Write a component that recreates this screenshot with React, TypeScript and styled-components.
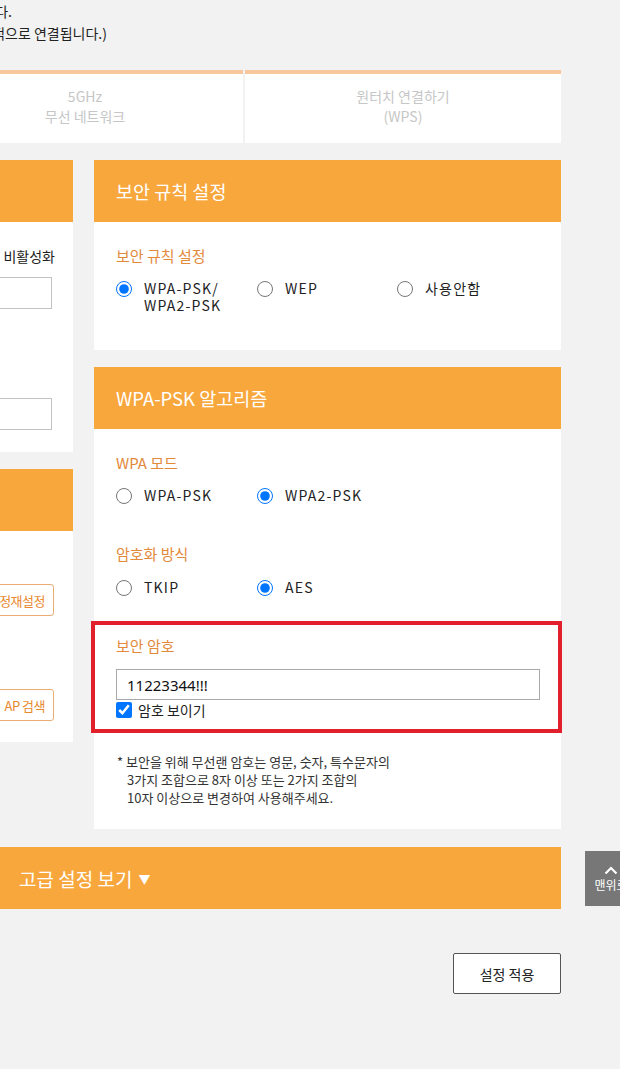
import React from "react";
import styled, { createGlobalStyle } from "styled-components";

const Global = createGlobalStyle`
  html, body { margin: 0; padding: 0; background: #f2f2f2; overflow: hidden; }
  body { font-family: "Noto Sans CJK KR", "Noto Sans", sans-serif; color: #222; }
  * { box-sizing: border-box; }
`;

const ORANGE = "#f8a73d";
const LABEL = "#e3893b";

const Page = styled.div`
  width: 788px;
  margin-left: -227px;
  min-height: 1069px;
  display: flex;
  flex-direction: column;
`;

const Intro = styled.div`
  font-size: 14px;
  line-height: 22px;
  color: #222;
`;

const IntroLine = styled.div<{ $w: number }>`
  width: ${(p) => p.$w}px;
  text-align: right;
  white-space: nowrap;
`;

const TabBar = styled.div`
  display: flex;
  justify-content: flex-end;
  gap: 2px;
  margin-top: 26px;
`;

const Tab = styled.div`
  width: 316px;
  height: 73px;
  border-top: 4px solid #f8c79d;
  background: #fff;
  display: flex;
  flex-direction: column;
  align-items: center;
  justify-content: center;
  padding-bottom: 5px;
  font-size: 14px;
  line-height: 20px;
  color: #c6c6c6;
`;

const Columns = styled.div`
  display: grid;
  grid-template-columns: 300px 467px;
  column-gap: 21px;
  align-items: start;
  margin-top: 17px;
`;

const Column = styled.div`
  display: flex;
  flex-direction: column;
  gap: 17px;
`;

const Panel = styled.section`
  background: #fff;
`;

const PanelHeader = styled.h2`
  margin: 0;
  height: 62px;
  background: ${ORANGE};
  color: #fff;
  font-size: 18.5px;
  font-weight: 400;
  padding-left: 22px;
  display: flex;
  align-items: center;
  white-space: nowrap;
`;

const LeftBody = styled.div<{ $h: number; $pt: number }>`
  height: ${(p) => p.$h}px;
  padding: ${(p) => p.$pt}px 21px 0 22px;
  font-size: 14px;
`;

const EndRow = styled.div<{ $mt?: number }>`
  display: flex;
  justify-content: flex-end;
  align-items: center;
  gap: 8px;
  margin-top: ${(p) => p.$mt ?? 0}px;
  margin-right: -2px;
`;

const RadioLine = styled(EndRow)`
  height: 20px;
  margin-right: -3px;
  line-height: 20px;
`;

const TextBox = styled.div<{ $mt: number }>`
  height: 32px;
  margin-top: ${(p) => p.$mt}px;
  border: 1px solid #c3c3c3;
  background: #fff;
`;

const HiddenLabel = styled.div`
  margin-top: 40px;
  height: 20px;
  font-size: 14px;
`;

const OutlineButton = styled.button`
  height: 32px;
  padding: 0 8px;
  border: 1px solid #e9ae73;
  border-radius: 3px;
  background: #fff;
  color: #e8892f;
  font-family: inherit;
  font-size: 13px;
  letter-spacing: -0.5px;
  white-space: nowrap;
`;

const RightBody = styled.div<{ $pb: number }>`
  padding: 24px 22px ${(p) => p.$pb}px;
`;

const FieldTitle = styled.div<{ $mt?: number }>`
  margin-top: ${(p) => p.$mt ?? 0}px;
  font-size: 15px;
  line-height: 20px;
  color: ${LABEL};
`;

const RadioGroup = styled.div<{ $mt: number }>`
  display: grid;
  grid-template-columns: 141px 140px auto;
  margin-top: ${(p) => p.$mt}px;
`;

const RadioItem = styled.label`
  display: flex;
  align-items: flex-start;
  gap: 12px;
  font-size: 14px;
  line-height: 17px;
  letter-spacing: 1.2px;
  color: #222;
`;

const Radio = styled.input.attrs({ type: "radio" })`
  width: 16px;
  height: 16px;
  margin: 0.5px 0 0 0;
  flex: none;
  accent-color: #0075ff;
`;

const SmallRadio = styled.input.attrs({ type: "radio" })`
  width: 15px;
  height: 15px;
  margin: 0;
`;

const PasswordBox = styled.div`
  margin: 25px -23px 0 -25px;
  border: 4px solid #e1202c;
  padding: 11px 18px 11px 21px;
`;

const PasswordInput = styled.input`
  display: block;
  width: 100%;
  height: 31px;
  margin-top: 13px;
  border: 1px solid #a9a9a9;
  padding: 0 10px;
  font-family: "Noto Sans", sans-serif;
  font-size: 15px;
  color: #111;
  outline: none;
`;

const CheckRow = styled.label`
  display: flex;
  align-items: center;
  gap: 6px;
  margin-top: 2px;
  font-size: 14px;
  line-height: 16px;
`;

const Check = styled.input.attrs({ type: "checkbox" })`
  width: 16px;
  height: 16px;
  margin: 0;
  accent-color: #0075ff;
`;

const Note = styled.p`
  margin: 20px 0 0 1px;
  padding-left: 10px;
  text-indent: -10px;
  font-size: 13px;
  line-height: 18px;
  color: #333;
`;

const BarRow = styled.div`
  position: relative;
  margin-top: 18px;
`;

const AdvancedBar = styled.div`
  height: 62px;
  background: ${ORANGE};
  color: #fff;
  font-size: 19px;
  padding-left: 246px;
  display: flex;
  align-items: center;
  gap: 6px;
`;

const Caret = styled.span`
  font-size: 12px;
`;

const TopButton = styled.div`
  position: absolute;
  left: calc(100% + 24px);
  top: 4px;
  width: 52px;
  height: 55px;
  background: #777;
  color: #fff;
  display: flex;
  flex-direction: column;
  align-items: center;
  justify-content: center;
  font-size: 12px;
  line-height: 14px;
  gap: 3px;
`;

const ApplyRow = styled.div`
  display: flex;
  justify-content: flex-end;
  margin-top: 44px;
`;

const ApplyButton = styled.button`
  width: 108px;
  height: 41px;
  border: 1px solid #555;
  border-radius: 2px;
  background: #fff;
  font-family: inherit;
  font-size: 14px;
  color: #222;
`;

export default function App() {
  return (
    <>
      <Global />
      <Page>
        <Intro>
          <IntroLine $w={239}>무선 네트워크 설정을 변경할 수 있습니다.</IntroLine>
          <IntroLine $w={334}>(WPS 버튼을 누르면 자동적으로 연결됩니다.)</IntroLine>
        </Intro>

        <TabBar>
          <Tab>
            <div>5GHz</div>
            <div>무선 네트워크</div>
          </Tab>
          <Tab>
            <div>원터치 연결하기</div>
            <div>(WPS)</div>
          </Tab>
        </TabBar>

        <Columns>
          <Column>
            <Panel>
              <PanelHeader>기본 설정</PanelHeader>
              <LeftBody $h={230} $pt={24}>
                <RadioLine>
                  <SmallRadio name="use" />
                  <span>활성화</span>
                  <SmallRadio name="use" />
                  <span>비활성화</span>
                </RadioLine>
                <TextBox $mt={11} />
                <HiddenLabel>이름</HiddenLabel>
                <TextBox $mt={29} />
              </LeftBody>
            </Panel>
            <Panel>
              <PanelHeader>설정</PanelHeader>
              <LeftBody $h={211} $pt={53}>
                <EndRow>
                  <OutlineButton>기본설정재설정</OutlineButton>
                </EndRow>
                <EndRow $mt={73}>
                  <OutlineButton>AP 검색</OutlineButton>
                </EndRow>
              </LeftBody>
            </Panel>
          </Column>

          <Column>
            <Panel>
              <PanelHeader>보안 규칙 설정</PanelHeader>
              <RightBody $pb={36}>
                <FieldTitle>보안 규칙 설정</FieldTitle>
                <RadioGroup $mt={14}>
                  <RadioItem>
                    <Radio name="rule" defaultChecked />
                    <span>
                      WPA-PSK/
                      <br />
                      WPA2-PSK
                    </span>
                  </RadioItem>
                  <RadioItem>
                    <Radio name="rule" />
                    <span>WEP</span>
                  </RadioItem>
                  <RadioItem>
                    <Radio name="rule" />
                    <span>사용안함</span>
                  </RadioItem>
                </RadioGroup>
              </RightBody>
            </Panel>

            <Panel>
              <PanelHeader>WPA-PSK 알고리즘</PanelHeader>
              <RightBody $pb={22}>
                <FieldTitle>WPA 모드</FieldTitle>
                <RadioGroup $mt={14}>
                  <RadioItem>
                    <Radio name="mode" />
                    <span>WPA-PSK</span>
                  </RadioItem>
                  <RadioItem>
                    <Radio name="mode" defaultChecked />
                    <span>WPA2-PSK</span>
                  </RadioItem>
                </RadioGroup>

                <FieldTitle $mt={40}>암호화 방식</FieldTitle>
                <RadioGroup $mt={15}>
                  <RadioItem>
                    <Radio name="enc" />
                    <span>TKIP</span>
                  </RadioItem>
                  <RadioItem>
                    <Radio name="enc" defaultChecked />
                    <span>AES</span>
                  </RadioItem>
                </RadioGroup>

                <PasswordBox>
                  <FieldTitle>보안 암호</FieldTitle>
                  <PasswordInput defaultValue="11223344!!!" />
                  <CheckRow>
                    <Check defaultChecked />
                    <span>암호 보이기</span>
                  </CheckRow>
                </PasswordBox>

                <Note>
                  * 보안을 위해 무선랜 암호는 영문, 숫자, 특수문자의
                  <br />
                  3가지 조합으로 8자 이상 또는 2가지 조합의
                  <br />
                  10자 이상으로 변경하여 사용해주세요.
                </Note>
              </RightBody>
            </Panel>
          </Column>
        </Columns>

        <BarRow>
          <AdvancedBar>
            <span>고급 설정 보기</span>
            <Caret>▼</Caret>
          </AdvancedBar>
          <TopButton>
            <svg width="14" height="9" viewBox="0 0 14 9">
              <path d="M1.5 7.5 L7 2 L12.5 7.5" fill="none" stroke="#fff" strokeWidth="2.2" />
            </svg>
            <span>맨위로</span>
          </TopButton>
        </BarRow>

        <ApplyRow>
          <ApplyButton>설정 적용</ApplyButton>
        </ApplyRow>
      </Page>
    </>
  );
}
